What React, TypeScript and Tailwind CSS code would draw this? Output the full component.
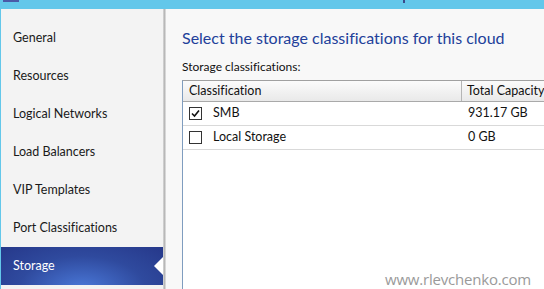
import React from "react";

const navItems = [
  "General",
  "Resources",
  "Logical Networks",
  "Load Balancers",
  "VIP Templates",
  "Port Classifications",
  "Storage",
];

const rows = [
  { name: "SMB", capacity: "931.17 GB", checked: true },
  { name: "Local Storage", capacity: "0 GB", checked: false },
];

const Check = ({ checked }: { checked: boolean }) => (
  <div className="w-[13px] h-[13px] border border-[#333] bg-white flex items-center justify-center">
    {checked && (
      <svg width="9" height="9" viewBox="0 0 9 9">
        <path d="M1 4.5 L3.5 7 L8 1.5" fill="none" stroke="#111" strokeWidth="1.6" />
      </svg>
    )}
  </div>
);

export default function App() {
  return (
    <div className="relative w-[544px] h-[289px] overflow-hidden flex flex-col bg-[#f7f7f7] font-['Lato',sans-serif] [font-variant-ligatures:none]">
      {/* title bar strip */}
      <div className="h-[9px] bg-[#63c7ea] flex items-start shrink-0">
        <div className="ml-[3px] w-[16px] h-[2px] bg-[#4a5aa8]" />
        <div className="ml-[384px] w-[2px] h-[3px] bg-[#3a4a8a]" />
      </div>

      <div className="flex flex-1 min-h-0">
        <div className="w-[1px] shrink-0 bg-[#63c7ea]" />

        {/* side nav */}
        <div className="w-[162px] shrink-0 bg-[#f3f3f3] pt-[10px] flex flex-col">
          {navItems.map((item) => {
            const active = item === "Storage";
            return (
              <div
                key={item}
                className={`relative h-[38px] flex items-center pl-[12px] text-[12.5px] ${
                  active
                    ? "text-white bg-[radial-gradient(ellipse_at_50%_110%,#4a78d8_0%,#2f4a9e_55%,#26388a_100%)]"
                    : "text-[#1a1a1a]"
                }`}
              >
                {item}
                {active && (
                  <div className="absolute right-0 top-[10px] w-0 h-0 border-t-[9px] border-b-[9px] border-r-[9px] border-t-transparent border-b-transparent border-r-white" />
                )}
              </div>
            );
          })}
        </div>

        {/* splitter */}
        <div className="w-[3px] shrink-0 bg-gradient-to-r from-[#d8d8d8] via-[#b8b8b8] to-[#e6e6e6]" />

        {/* content */}
        <div className="flex-1 min-w-0 flex flex-col pl-[16px] pt-[18px] bg-[#f8f8f8]">
          <div className="text-[16px] leading-[22px] text-[#22409a] whitespace-nowrap">
            Select the storage classifications for this cloud
          </div>
          <div className="mt-[11px] text-[12px] leading-[14px] text-[#111]">
            Storage classifications:
          </div>

          <div className="mt-[6px] flex-1 w-[400px] bg-white border-l border-t border-l-[#7f9dbf] border-t-[#a0a0a0]">
            <div className="flex h-[21px] text-[12.5px] text-[#111] bg-gradient-to-b from-[#fbfbfb] to-[#e9e9e9] border-b border-[#a9a9a9]">
              <div className="w-[279px] shrink-0 pl-[6px] flex items-center border-r border-[#b5b5b5]">
                Classification
              </div>
              <div className="pl-[5px] flex items-center whitespace-nowrap">Total Capacity</div>
            </div>
            {rows.map((r) => (
              <div
                key={r.name}
                className="flex h-[24px] text-[12.5px] text-[#111] border-b border-[#d9d9d9]"
              >
                <div className="w-[280px] shrink-0 pl-[6px] flex items-center gap-[11px]">
                  <Check checked={r.checked} />
                  <span>{r.name}</span>
                </div>
                <div className="pl-[5px] flex items-center">{r.capacity}</div>
              </div>
            ))}
          </div>
        </div>
      </div>

      {/* watermark */}
      <div className="absolute left-[385px] top-[268px] text-[15px] text-[#9a9a9a] tracking-[-0.2px] font-['Open_Sans',sans-serif]">
        www.rlevchenko.com
      </div>
    </div>
  );
}
